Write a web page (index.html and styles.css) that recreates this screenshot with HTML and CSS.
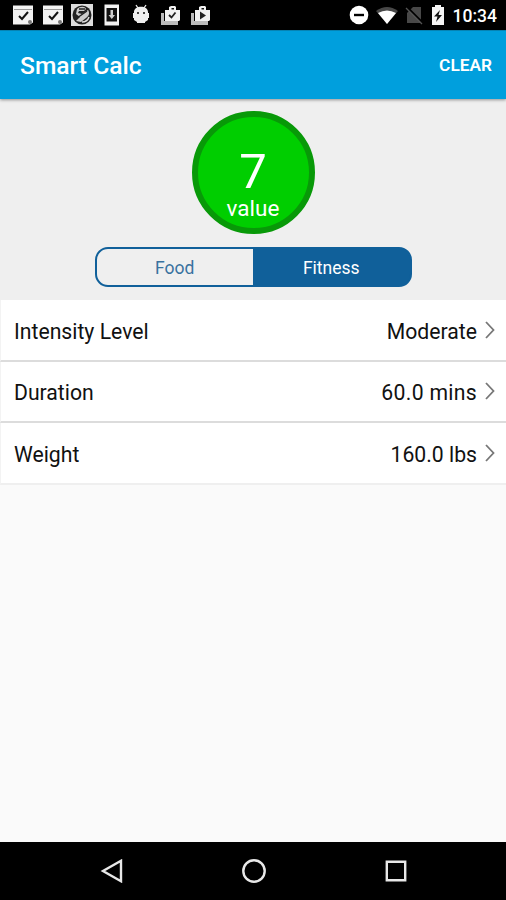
FILE: index.html
```html
<!DOCTYPE html>
<html lang="en">
<head>
  <meta charset="UTF-8">
  <meta name="viewport" content="width=device-width, initial-scale=1.0">
  <title>Smart Calc</title>
  <link rel="stylesheet" href="styles.css">
</head>
<body>
  <div class="status-bar">
    <div class="notifications">
      <svg width="22" height="22" viewBox="0 0 22 22">
        <path fill="#f2f2f2" d="M1 1.500h20v17l-3 2H1z"/>
        <path stroke="#999" d="M2 5.500h18"/>
        <path fill="none" stroke="#111" stroke-width="2" d="M7 12l3 3 6-7"/>
        <circle cx="18" cy="18" r="2" fill="#777"/>
      </svg>
      <svg width="22" height="22" viewBox="0 0 22 22">
        <path fill="#f2f2f2" d="M1 1.500h20v17l-3 2H1z"/>
        <path stroke="#999" d="M2 5.500h18"/>
        <path fill="none" stroke="#111" stroke-width="2" d="M7 12l3 3 6-7"/>
        <circle cx="18" cy="18" r="2" fill="#777"/>
      </svg>
      <svg width="22" height="22" viewBox="0 0 22 22">
        <path fill="#ddd" d="M0 0h22v22H0z"/>
        <circle cx="11" cy="11" r="9.500" fill="#222"/>
        <path fill="#ccc" d="M6 5c3-3 8-3 9 0l-2 2-5 0-1 2 4 1 6-4c2 3 1 6-2 8l-5 4-5-1 4-4-4-3z"/>
        <path fill="none" stroke="#222" stroke-width="1.500" d="M6 14l10-7M8 5h6"/>
        <path fill="none" stroke="#ddd" stroke-width="1.500" d="M11 18c3 0 6-2 7-5"/>
      </svg>
      <svg width="22" height="22" viewBox="0 0 22 22">
        <path fill="#f2f2f2" d="M3.500 .5h14.500v21h-14.500z"/>
        <path fill="#111" d="M5.500 4h10.500v13.500h-10.500z"/>
        <path fill="#ccc" d="M9.500 6h2.500v5h2l-3.200 4-3.300-4h2z"/>
      </svg>
      <svg width="22" height="22" viewBox="0 0 22 22">
        <path stroke="#eee" stroke-width="1.300" d="M6 1l2 3M16 1l-2 3"/>
        <path fill="#eee" d="M4 8c0-7 14-7 14 0v1h1v5h-1v2l-3 2H7l-3-2v-2H3V9h1z"/>
        <path fill="#eee" d="M7 17h8v2H7z"/>
        <path fill="#444" d="M7 8h2v2H7zM13 8h2v2h-2z"/>
      </svg>
      <svg width="22" height="22" viewBox="0 0 22 22">
        <path fill="#bbb" d="M1 9h3v8h14v4H1z"/>
        <path fill="#f2f2f2" d="M5 6h4V3l2-1h4l1 1v3h4v10l-1 1H5z"/>
        <path fill="#111" d="M11.500 4h2.500v1.500h-2.500z"/>
        <path fill="none" stroke="#222" stroke-width="1.800" d="M9 11l2.500 2.500 4-5"/>
      </svg>
      <svg width="22" height="22" viewBox="0 0 22 22">
        <path fill="#bbb" d="M1 9h3v8h14v4H1z"/>
        <path fill="#f2f2f2" d="M5 6h4V3l2-1h4l1 1v3h4v10l-1 1H5z"/>
        <path fill="#111" d="M11.500 4h2.500v1.500h-2.500z"/>
        <path fill="#222" d="M10 7.500l6 4-6 4z"/>
      </svg>
    </div>
    <div class="system">
      <svg width="20" height="22" viewBox="0 0 20 22">
        <circle cx="10" cy="11" r="9.300" fill="#fff"/>
        <path fill="#000" d="M5 9.800h10v2.400H5z"/>
      </svg>
      <svg width="22" height="22" viewBox="0 0 22 22">
        <path fill="#484848" d="M0 7Q11-1 22 7L11 20z"/>
        <path fill="#fff" d="M2 9Q11 4 20 9L11 20z"/>
      </svg>
      <svg width="18" height="22" viewBox="0 0 18 22">
        <path fill="#484848" d="M2 9l6-6h8v16H2z"/>
        <path stroke="#000" stroke-width="2" d="M1 2l16 16"/>
        <path stroke="#555" stroke-width="1.300" d="M1 4l16 16"/>
      </svg>
      <svg width="14" height="22" viewBox="0 0 14 22">
        <path fill="#f5f5f5" d="M1 3h3V1h6v2h3v18H1z"/>
        <path fill="#111" d="M9 6l-6 6.500h3.500L5 18l6-7H7.500z"/>
      </svg>
      <span class="time">10:34</span>
    </div>
  </div>

  <header class="app-bar">
    <h1>Smart Calc</h1>
    <button class="clear">CLEAR</button>
  </header>

  <section class="summary">
    <div class="result">
      <span class="result-number">7</span>
      <span class="result-label">value</span>
    </div>
    <div class="tabs">
      <button class="tab">Food</button>
      <button class="tab active">Fitness</button>
    </div>
  </section>

  <ul class="options">
    <li>
      <span>Intensity Level</span>
      <span class="option-value">Moderate</span>
      <svg width="10" height="18" viewBox="0 0 10 18"><path class="chevron" d="M1 1l7.500 8L1 17"/></svg>
    </li>
    <li>
      <span>Duration</span>
      <span class="option-value duration">60.0 mins</span>
      <svg width="10" height="18" viewBox="0 0 10 18"><path class="chevron" d="M1 1l7.500 8L1 17"/></svg>
    </li>
    <li>
      <span>Weight</span>
      <span class="option-value">160.0 lbs</span>
      <svg width="10" height="18" viewBox="0 0 10 18"><path class="chevron" d="M1 1l7.500 8L1 17"/></svg>
    </li>
  </ul>

  <nav class="nav-bar">
    <svg width="24" height="24" viewBox="0 0 24 24"><path d="M21 1.800v20.400L3 12z"/></svg>
    <svg width="24" height="24" viewBox="0 0 24 24"><circle cx="12" cy="12" r="10.700"/></svg>
    <svg width="24" height="24" viewBox="0 0 24 24"><path d="M2.800 2.800h18.400v18.400H2.800z"/></svg>
  </nav>
</body>
</html>
```

FILE: styles.css
```css
* {
  box-sizing: border-box;
}
body {
  font-family: Roboto, sans-serif;
  margin: 0;
  height: 900px;
  display: flex;
  flex-direction: column;
  background-color: #fafafa;
  color: #111;
  overflow: hidden;
}
svg {
  display: block;
  flex: none;
}
button {
  font-family: inherit;
  border: none;
  background: none;
  padding: 0;
  cursor: pointer;
}
.status-bar {
  height: 30px;
  flex: none;
  display: flex;
  justify-content: space-between;
  align-items: center;
  padding: 0 9px 0 12px;
  background: #000;
}
.notifications {
  display: flex;
  gap: 7.600px;
}
.system {
  display: flex;
  align-items: center;
}
.system svg:nth-child(1) {
  margin-right: 7px;
}
.system svg:nth-child(2) {
  margin-right: 7px;
}
.system svg:nth-child(3) {
  margin-right: 8px;
}
.time {
  margin-left: 8px;
  color: #fff;
  font-size: 17.500px;
  font-weight: 500;
  line-height: 24px;
  padding-top: 2px;
}
.app-bar {
  height: 69px;
  flex: none;
  display: flex;
  justify-content: space-between;
  align-items: center;
  padding: 1px 14px 0 20px;
  background: #009fdd;
  border-top: 1px solid #0683b3;
  box-shadow: 0 1px 3px rgba(0, 0, 0, 0.4);
  color: #fff;
  z-index: 1;
}
h1 {
  margin: 0;
  font-size: 24.600px;
  font-weight: 500;
}
.clear {
  color: #fff;
  font-size: 17.300px;
  font-weight: 600;
  padding-bottom: 2px;
}
.summary {
  height: 201px;
  flex: none;
  display: flex;
  flex-direction: column;
  align-items: center;
  padding-top: 12px;
  background: #efefef;
}
.result {
  width: 123px;
  height: 123px;
  display: flex;
  flex-direction: column;
  align-items: center;
  padding-top: 34px;
  border: 6px solid #089908;
  border-radius: 50%;
  background: #00ce00;
  color: #fff;
}
.result-number {
  font-size: 49px;
  line-height: 41px;
  margin-bottom: 4px;
}
.result-label {
  font-size: 22.500px;
  line-height: 24px;
}
.tabs {
  width: 317px;
  height: 40px;
  display: flex;
  margin-top: 13px;
  border: 2px solid #10609a;
  border-radius: 13px;
  background: linear-gradient(to right, #efefef 50%, #10609a 50%) border-box;
}
.tab {
  flex: 1;
  color: #39729f;
  font-size: 17.500px;
  padding-top: 1px;
}
.tab.active {
  color: #fff;
}
.options {
  list-style: none;
  margin: 0;
  padding: 0;
}
.options li {
  height: 61.500px;
  display: flex;
  align-items: center;
  padding: 0 11px 0 13px;
  background: #fff;
  border-left: 1px solid #f3f3f3;
  border-bottom: 2px solid #dcdcdc;
  font-size: 21.200px;
}
.options li span {
  padding-top: 3px;
}
.options li:last-child {
  border-bottom-color: #efefef;
}
.option-value {
  margin-left: auto;
  margin-right: 8px;
}
.duration {
  letter-spacing: 0.3px;
}
.chevron {
  fill: none;
  stroke: #777;
  stroke-width: 1.800;
}
.nav-bar {
  height: 58px;
  display: flex;
  justify-content: center;
  align-items: center;
  gap: 118px;
  padding-left: 2px;
  margin-top: auto;
  background: #000;
}
.nav-bar svg {
  fill: none;
  stroke: #e8e8e8;
  stroke-width: 2.400;
}
```
